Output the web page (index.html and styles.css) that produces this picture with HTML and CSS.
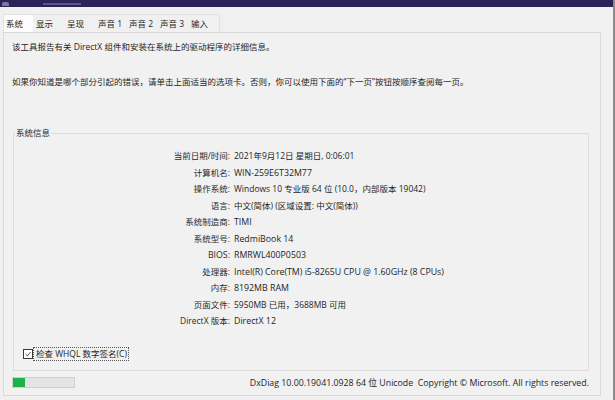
FILE: index.html
```html
<!DOCTYPE html>
<html lang="zh-CN">
<head>
<meta charset="utf-8">
<title>DirectX 诊断工具</title>
<link rel="stylesheet" href="styles.css">
</head>
<body>
<div class="window">
  <div class="titlebar">
    <span class="ticon"></span>
    <span class="tmark"></span>
  </div>
  <div class="client">
    <div class="tabs">
      <div class="tab active">系统</div>
      <div class="tab">显示</div>
      <div class="tab">呈现</div>
      <div class="tab">声音 1</div>
      <div class="tab">声音 2</div>
      <div class="tab">声音 3</div>
      <div class="tab">输入</div>
    </div>
    <div class="page">
      <p class="intro first">该工具报告有关 DirectX 组件和安装在系统上的驱动程序的详细信息。</p>
      <p class="intro second">如果你知道是哪个部分引起的错误，请单击上面适当的选项卡。否则，你可以使用下面的“下一页”按钮按顺序查阅每一页。</p>
      <fieldset class="group">
        <legend>系统信息</legend>
        <div class="info">
          <div class="lbl">当前日期/时间:</div><div class="val">2021年9月12日 星期日, 0:06:01</div>
          <div class="lbl">计算机名:</div><div class="val en">WIN-259E6T32M77</div>
          <div class="lbl">操作系统:</div><div class="val">Windows 10 专业版 64 位 (10.0，内部版本 19042)</div>
          <div class="lbl">语言:</div><div class="val">中文(简体) (区域设置: 中文(简体))</div>
          <div class="lbl">系统制造商:</div><div class="val en">TIMI</div>
          <div class="lbl">系统型号:</div><div class="val en">RedmiBook 14</div>
          <div class="lbl en">BIOS:</div><div class="val en">RMRWL400P0503</div>
          <div class="lbl">处理器:</div><div class="val en">Intel(R) Core(TM) i5-8265U CPU @ 1.60GHz (8 CPUs)</div>
          <div class="lbl">内存:</div><div class="val en">8192MB RAM</div>
          <div class="lbl">页面文件:</div><div class="val">5950MB 已用，3688MB 可用</div>
          <div class="lbl">DirectX 版本:</div><div class="val en">DirectX 12</div>
        </div>
        <div class="check">
          <span class="box"><svg viewBox="0 0 10 10" width="10" height="10"><path d="M2 5.2 L4.2 7.4 L8.2 2.6" fill="none" stroke="#1a1a1a" stroke-width="1"/></svg></span>
          <span class="clabel">检查 WHQL 数字签名(C)</span>
        </div>
      </fieldset>
      <div class="footer">
        <div class="progress"><div class="fill" style="width:12px"></div></div>
        <div class="copy">DxDiag 10.00.19041.0928 64 位 Unicode&nbsp; Copyright © Microsoft. All rights reserved.</div>
      </div>
    </div>
  </div>
</div>
</body>
</html>
```
FILE: styles.css
```css
* { box-sizing: border-box; }
html, body {
  margin: 0;
  padding: 0;
}
body {
  width: 615px;
  height: 400px;
  overflow: hidden;
  background: #f0f0f0;
  font-family: "Open Sans", "Noto Sans CJK SC", sans-serif;
  font-size: 8.5px;
  color: #1e1e1e;
}
.window {
  display: flex;
  flex-direction: column;
  width: 615px;
  height: 400px;
  border-right: 2px solid #8c8c8c;
}
.titlebar {
  height: 7px;
  background: #2c2159;
  display: flex;
  align-items: flex-end;
  overflow: hidden;
  gap: 34px;
  padding-left: 2px;
}
.ticon {
  width: 7px;
  height: 4px;
  background: #7d779c;
  border-radius: 2px 2px 0 0;
  margin-bottom: 1px;
}
.tmark {
  width: 38px;
  height: 2px;
  background: #5d5585;
  margin-bottom: 2px;
}
.client {
  flex: 1;
  display: flex;
  flex-direction: column;
  padding: 7px 12px 4px 3px;
}
.tabs {
  display: flex;
  height: 18px;
  align-self: flex-start;
  border: 1px solid #e2e2e2;
  border-bottom: none;
}
.tab {
  width: 31px;
  line-height: 17px;
  padding-left: 3px;
  white-space: nowrap;
}
.tab.active {
  width: 29px;
  background: #fcfcfc;
  padding-left: 2px;
}
.page {
  flex: 1;
  border: 1px solid #d9d9d9;
  display: flex;
  flex-direction: column;
  background: #f1f1f1;
}
.intro {
  margin: 0;
  line-height: 12px;
  padding-left: 8px;
  white-space: nowrap;
}
.intro.first { margin-top: 8px; }
.intro.second { margin-top: 23px; }
.group {
  margin: 39px 11px 0 9px;
  padding: 9px 0 9px 0;
  border: 1px solid #dcdcdc;
  min-width: 0;
}
.group legend {
  padding: 0 1px;
  margin-left: 1px;
  line-height: 12px;
  color: #2a2a2a;
}
.info {
  display: grid;
  grid-template-columns: 216px 1fr;
  column-gap: 4px;
  line-height: 16.5px;
}
.lbl { text-align: right; white-space: nowrap; color: #2a2a2a; }
.val { white-space: nowrap; }
.en { font-size: 8.8px; }
.check {
  display: flex;
  align-items: center;
  margin: 17px 0 0 9px;
  height: 14px;
}
.box {
  width: 10px;
  height: 10px;
  border: 1px solid #3a3a3a;
  background: #fff;
  display: flex;
  align-items: center;
  justify-content: center;
}
.box svg { display: block; width: 8px; height: 8px; }
.clabel {
  margin-left: 1px;
  padding: 0 1px 0 2px;
  line-height: 12px;
  outline: 1px dotted #555;
  outline-offset: 0;
}
.footer {
  display: flex;
  align-items: center;
  justify-content: space-between;
  margin: 6px 11px 0 8px;
  height: 11px;
}
.progress {
  width: 63px;
  height: 11px;
  background: #e4e4e4;
  border: 1px solid #d0d0d0;
}
.fill {
  height: 100%;
  background: #1cb24a;
}
.copy { white-space: nowrap; font-size: 8.8px; }
```
